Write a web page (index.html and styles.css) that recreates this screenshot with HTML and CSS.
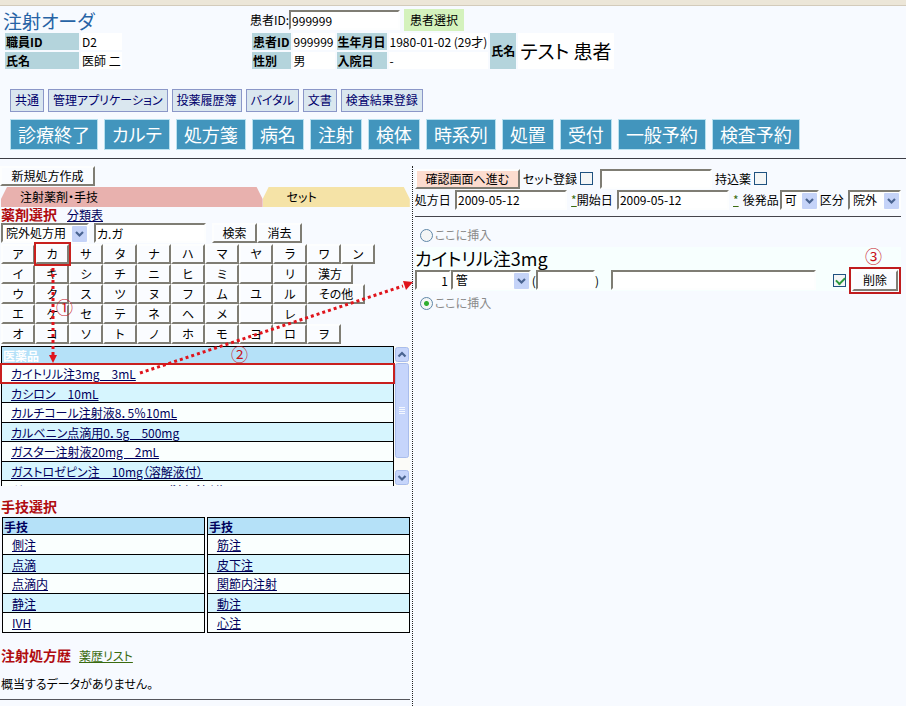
FILE: index.html
```html
<!DOCTYPE html>
<html lang="ja">
<head>
<meta charset="utf-8">
<title>注射オーダ</title>
<link rel="stylesheet" href="styles.css">
</head>
<body>
<svg class="defs" width="0" height="0" aria-hidden="true">
  <symbol id="chev" viewBox="0 0 15 16">
    <rect x="0" y="0" width="15" height="16" rx="1" fill="#c5d3f8"/>
    <path d="M4 6l3.500 3.500L11 6" fill="none" stroke="#4a6491" stroke-width="2.200"/>
  </symbol>
</svg>
<header>
  <div class="head">
    <div class="staff">
      <h1>注射オーダ</h1>
      <table class="info">
        <tr><th class="wide">職員ID</th><td>D2</td></tr>
        <tr><th>氏名</th><td>医師 二</td></tr>
      </table>
    </div>
    <div class="patient">
      <div class="pick">
        <label for="pid">患者ID:</label><input id="pid" class="field medium" value="999999">
        <button class="green">患者選択</button>
      </div>
      <table class="info">
        <tr><th>患者ID</th><td>999999</td><th>生年月日</th><td>1980-01-02 (29才)</td><th rowspan="2" class="center">氏名</th><td rowspan="2" class="name">テスト 患者</td></tr>
        <tr><th>性別</th><td>男</td><th>入院日</th><td>-</td></tr>
      </table>
    </div>
  </div>
  <nav class="small-nav">
    <a href="#">共通</a><a href="#">管理アプリケーション</a><a href="#">投薬履歴簿</a><a href="#">バイタル</a><a href="#">文書</a><a href="#">検査結果登録</a>
  </nav>
  <nav class="big-nav">
    <a href="#">診療終了</a><a href="#">カルテ</a><a href="#">処方箋</a><a href="#">病名</a><a href="#">注射</a><a href="#">検体</a><a href="#">時系列</a><a href="#">処置</a><a href="#">受付</a><a href="#">一般予約</a><a href="#">検査予約</a>
  </nav>
</header>
<main>
  <section class="left">
    <button class="raised new">新規処方作成</button>
    <div class="tabs">
      <a href="#" class="tab pink">注射薬剤・手技</a>
      <a href="#" class="tab yellow">セット</a>
    </div>
    <div class="heading"><h2>薬剤選択</h2><a href="#">分類表</a></div>
    <div class="search">
      <span class="select use"><select aria-label="処方区分"><option>院外処方用</option></select><svg><use href="#chev"/></svg></span>
      <input class="field medium" aria-label="薬剤名" value="カ.ガ">
      <div class="actions"><button class="raised">検索</button><button class="raised">消去</button></div>
    </div>
    <div class="kana">
      <div><button>ア</button><button>カ</button><button>サ</button><button>タ</button><button>ナ</button><button>ハ</button><button>マ</button><button>ヤ</button><button>ラ</button><button>ワ</button><button>ン</button></div>
      <div><button>イ</button><button>キ</button><button>シ</button><button>チ</button><button>ニ</button><button>ヒ</button><button>ミ</button><button aria-label="空き"></button><button>リ</button><button class="k2">漢方</button></div>
      <div><button>ウ</button><button>ク</button><button>ス</button><button>ツ</button><button>ヌ</button><button>フ</button><button>ム</button><button>ユ</button><button>ル</button><button class="k3">その他</button></div>
      <div><button>エ</button><button>ケ</button><button>セ</button><button>テ</button><button>ネ</button><button>ヘ</button><button>メ</button><button aria-label="空き"></button><button>レ</button></div>
      <div><button>オ</button><button>コ</button><button>ソ</button><button>ト</button><button>ノ</button><button>ホ</button><button>モ</button><button>ヨ</button><button>ロ</button><button>ヲ</button></div>
    </div>
    <div class="drugs">
      <div class="viewport">
        <table class="list">
          <thead><tr><th class="white">医薬品</th></tr></thead>
          <tbody>
            <tr><td><a href="#">カイトリル注3mg　3mL</a></td></tr>
            <tr><td><a href="#">カシロン　10mL</a></td></tr>
            <tr><td><a href="#">カルチコール注射液8．5％10mL</a></td></tr>
            <tr><td><a href="#">カルベニン点滴用0．5g　500mg</a></td></tr>
            <tr><td><a href="#">ガスター注射液20mg　2mL</a></td></tr>
            <tr><td><a href="#">ガストロゼピン注　10mg（溶解液付）</a></td></tr>
            <tr><td><a href="#">ガンマーベニンP2．5g　50mL（溶解液付）</a></td></tr>
          </tbody>
        </table>
      </div>
      <svg class="scroll" width="16" height="140" viewBox="0 0 16 140" aria-hidden="true">
        <rect width="16" height="140" fill="#fbfbf8"/>
        <g stroke="#a9bdec" stroke-width="1">
          <rect x="1.500" y="1.500" width="13" height="14" rx="2" fill="#c6d5fb"/>
          <rect x="1.500" y="17.500" width="13" height="94" rx="2" fill="#c6d5fb"/>
          <rect x="1.500" y="124.500" width="13" height="14" rx="2" fill="#c6d5fb"/>
        </g>
        <path d="M4.500 10.500L8 7l3.500 3.500M4.500 130L8 133.500l3.500-3.500" fill="none" stroke="#4a6491" stroke-width="2.200"/>
        <path d="M5 61.500h6M5 63.500h6M5 65.500h6M5 67.500h6" stroke="#f4f8ff"/>
      </svg>
    </div>
    <div class="heading skill"><h2>手技選択</h2></div>
    <div class="pair">
      <table class="list">
        <thead><tr><th>手技</th></tr></thead>
        <tbody>
          <tr><td><a href="#">側注</a></td></tr><tr><td><a href="#">点滴</a></td></tr><tr><td><a href="#">点滴内</a></td></tr><tr><td><a href="#">静注</a></td></tr><tr><td><a href="#">IVH</a></td></tr>
        </tbody>
      </table>
      <table class="list">
        <thead><tr><th>手技</th></tr></thead>
        <tbody>
          <tr><td><a href="#">筋注</a></td></tr><tr><td><a href="#">皮下注</a></td></tr><tr><td><a href="#">関節内注射</a></td></tr><tr><td><a href="#">動注</a></td></tr><tr><td><a href="#">心注</a></td></tr>
        </tbody>
      </table>
    </div>
    <div class="heading history"><h2>注射処方歴</h2><a href="#" class="olive">薬歴リスト</a></div>
    <p class="empty">概当するデータがありません。</p>
  </section>
  <section class="right">
    <div class="order">
      <div class="line one">
        <button class="raised peach">確認画面へ進む</button>
        <label for="setreg">セット登録</label><input type="checkbox" id="setreg">
        <input class="field medium" aria-label="セット名">
        <label for="bring">持込薬</label><input type="checkbox" id="bring">
      </div>
      <div class="line two">
        <label for="d1">処方日</label><input id="d1" class="field medium" value="2009-05-12">
        <span><a href="#" class="olive">*</a><label for="d2">開始日</label></span><input id="d2" class="field medium" value="2009-05-12">
        <a href="#" class="olive">*</a>
        <span class="group"><label for="gen">後発品</label><span class="select tiny"><select id="gen"><option>可</option></select><svg><use href="#chev"/></svg></span><label for="cls">区分</label></span>
        <span class="select short"><select id="cls"><option>院外</option></select><svg><use href="#chev"/></svg></span>
      </div>
    </div>
    <label class="insert"><input type="radio" name="ins">ここに挿入</label>
    <div class="item">
      <h3>カイトリル注3mg</h3>
      <div class="dose">
        <input class="field qty" aria-label="数量" value="1">
        <span class="select unit"><select aria-label="単位"><option>管</option></select><svg><use href="#chev"/></svg></span>
        <span class="paren">(<input class="field sub" aria-label="換算量">)</span>
        <input class="field note" aria-label="コメント">
        <input type="checkbox" class="keep" aria-label="選択" checked>
        <span class="framed"><button class="raised">削除</button><span class="mark m3">③</span></span>
      </div>
    </div>
    <label class="insert after"><input type="radio" name="ins" checked>ここに挿入</label>
  </section>
  <svg class="arrows" width="420" height="230" viewBox="0 0 420 230" aria-hidden="true">
    <g fill="none" stroke="#c8201e" stroke-width="2">
      <rect x="35" y="84" width="35" height="22"/>
      <rect x="1" y="205" width="393" height="19"/>
    </g>
    <g fill="none" stroke="#e0141c" stroke-width="3" stroke-dasharray="3 3">
      <path d="M53 109V196"/>
      <path d="M140 214L403 127"/>
    </g>
    <path d="M49 196h8l-4 8zM403 122l10 1-7 8z" fill="#e0141c"/>
  </svg>
  <span class="mark m1">①</span>
  <span class="mark m2">②</span>
</main>
</body>
</html>
```
FILE: styles.css
```css
* { box-sizing: border-box; }

body {
  display: flex;
  flex-direction: column;
  min-height: 100vh;
  margin: 0;
  border-top: 5px solid #ece6d8;
  background: #f7faff;
  color: #000;
  font: 12px/16px "Noto Sans CJK JP", sans-serif;
  font-feature-settings: "palt";
}

.defs { position: absolute; }

h1, h2, h3, p { margin: 0; font-weight: 400; }

button, input, select { font: inherit; font-feature-settings: inherit; color: inherit; margin: 0; }

a { color: #00005c; }
.olive { color: #3a6b10; }

header { border-top: 1px solid #d3cbbb; border-bottom: 1px solid #3c3c44; height: 154px; }

.head { display: flex; height: 65px; }
.staff { width: 250px; padding: 4px 0 0 3px; }
h1 { color: #2763a5; font-size: 19px; line-height: 21px; }
.patient { padding-top: 3px; }
.pick { display: flex; align-items: center; height: 22px; }
.pick .medium { width: 111px; }
.green { margin-left: 4px; height: 22px; padding: 0 6px; border: 0; background: #d4f2bd; }

.info { border-spacing: 2px; }
.info th { padding: 0 1px; background: #b4d4dc; text-align: left; white-space: nowrap; }
.info td { padding: 0 1px; background: #fff; white-space: nowrap; }
.info tr { height: 17px; }
.info .wide { width: 74px; }
.info .name { font-size: 19px; padding: 0 2px; }

.field {
  height: 20px;
  padding: 0 1px;
  border: 2px solid #fdfefe;
  border-color: #7f7d74 #fdfefe #fdfefe #7f7d74;
  background: #fff;
}
.medium { width: 112px; }

.small-nav, .big-nav { display: flex; padding-left: 10px; }
.small-nav { gap: 4px; margin-top: 18px; }
.small-nav a {
  height: 23px;
  padding: 2px 4px;
  border: 1px solid #8b97c8;
  background: #dae7ef;
  color: #00006c;
  text-decoration: none;
}
.big-nav { gap: 6px; margin-top: 7px; }
.big-nav a {
  height: 31px;
  padding: 0 7px;
  border: 1px solid #b9e1ef;
  background: #4295bd;
  color: #fff;
  font-size: 18px;
  line-height: 28px;
  text-decoration: none;
}

main {
  position: relative;
  flex: 1;
  display: grid;
  grid-template-columns: minmax(0, 5fr) minmax(0, 6fr);
}

.left { padding: 7px 2px 0 0; }
.right { margin-top: 7px; border-left: 1px dotted #222; padding: 2px 5px 0 2px; }

.raised {
  height: 20px;
  padding: 0 8px;
  border: 2px solid #fdfefe;
  border-color: #fdfefe #7f7d74 #7f7d74 #fdfefe;
  background: #fafcff;
  line-height: 16px;
  white-space: nowrap;
}
.new { display: block; width: 95px; }

.tabs { display: flex; height: 20px; margin: 1px 0 0 1px; }
.tab { color: #000; text-decoration: none; line-height: 20px; }
.pink { width: 64%; padding-left: 19px; background: #e8b1ae; clip-path: polygon(6px 0, calc(100% - 6px) 0, 100% 60%, 100% 100%, 0 100%, 0 60%); }
.yellow { flex: 1; padding-left: 24px; background: #f5e3a7; clip-path: polygon(6px 0, calc(100% - 6px) 0, 100% 60%, 100% 100%, 0 100%, 0 60%); }

.heading { display: flex; gap: 10px; height: 16px; padding-left: 1px; }
h2 { color: #b00c10; font-size: 14px; line-height: 14px; font-weight: 700; }

.search { display: flex; gap: 5px; padding-left: 1px; height: 21px; }
.actions { display: flex; padding-left: 1px; }
.actions .raised { width: 45px; }

.select { position: relative; display: inline-block; height: 20px; }
.select select {
  width: 100%;
  height: 20px;
  padding: 0 3px;
  border: 2px solid #fdfefe;
  border-color: #7f7d74 #fdfefe #fdfefe #7f7d74;
  border-radius: 0;
  background: #fff;
  appearance: none;
}
.select svg { position: absolute; right: 2px; top: 3px; width: 15px; height: 16px; pointer-events: none; }
.use { width: 88px; }
.tiny { width: 39px; }
.short { width: 53px; }
.unit { width: 80px; }

.kana { padding-left: 1px; margin-bottom: 2px; }
.kana div { display: flex; height: 20px; }
.kana button {
  width: 34px;
  height: 20px;
  padding: 0;
  border: 2px solid #fdfefe;
  border-color: #fdfefe #7f7d74 #7f7d74 #fdfefe;
  background: #fafcff;
  line-height: 16px;
}
.kana .k2 { width: 46px; }
.kana .k3 { width: 58px; }

.list { width: 100%; border-collapse: collapse; line-height: 15px; }
.list th, .list td { border: 1px solid #000; text-align: left; }
.list th { height: 17px; padding: 0 1px; background: #b5e1f8; color: #00005c; }
.list .white { color: #fff; }
.list td { height: 19px; padding: 0 9px; background: #fafffe; }
.list tr:nth-child(odd) td { height: 20px; }
.list tr:nth-child(even) td { background: #d6f5fe; }

.drugs { display: flex; height: 140px; padding-left: 1px; }
.viewport { flex: 1; overflow: hidden; }
.scroll { flex: none; }

.skill { margin-top: 13px; }
.pair { display: grid; grid-template-columns: 1fr 1fr; gap: 2px; padding: 2px 0 0 2px; }
.history { margin-top: 15px; gap: 8px; }
.empty { margin-top: 12px; padding: 0 1px 7px; border-bottom: 1px solid #55555c; }

.line { display: flex; align-items: center; white-space: nowrap; height: 21px; }
.one label { margin: 0 3px; }
.one .medium { margin-left: 7px; }
.two { justify-content: space-between; }
.order { padding-bottom: 6px; border-bottom: 1px solid #44444c; margin-bottom: 10px; }
.peach { width: 105px; background: #fcdccf; }
.group { display: flex; align-items: center; gap: 1px; }

input[type="checkbox"], input[type="radio"] {
  flex: none;
  width: 13px;
  height: 13px;
  border: 1px solid #1f5280;
  background: #f4f6f6;
  appearance: none;
}
input[type="radio"] { border-color: #5f87a8; border-radius: 50%; }
input[type="radio"]:checked { background: radial-gradient(#2fae2f 0 2px, #f4f6f6 3px); }
.keep:checked::after {
  content: "";
  display: block;
  width: 7px;
  height: 4px;
  margin: 2px;
  border: solid #2c9a3c;
  border-width: 0 0 2px 2px;
  transform: rotate(-45deg);
}

.insert { display: flex; align-items: center; gap: 2px; height: 16px; padding-left: 5px; color: #8a8a8a; }
.item { background: #f7fffe; margin-top: 4px; }
h3 { font-size: 18px; line-height: 22px; }
.dose { display: flex; align-items: center; height: 22px; white-space: nowrap; }
.qty { width: 36px; text-align: right; }
.paren { margin-left: 1px; }
.sub { width: 59px; }
.note { flex: 1; min-width: 0; margin: 0 17px 0 12px; }
.framed { position: relative; margin-left: 3px; padding: 1px; border: 2px solid #c01c1e; height: 27px; }
.framed .raised { width: 46px; height: 21px; padding: 0; display: block; }
.after { margin-top: 4px; }

.arrows { position: absolute; left: 0; top: 0; pointer-events: none; }
.mark { position: absolute; color: #c8141c; font-size: 17px; line-height: 18px; }
.m1 { left: 56px; top: 139px; }
.m2 { left: 231px; top: 186px; }
.m3 { right: 17px; top: -22px; }
```
